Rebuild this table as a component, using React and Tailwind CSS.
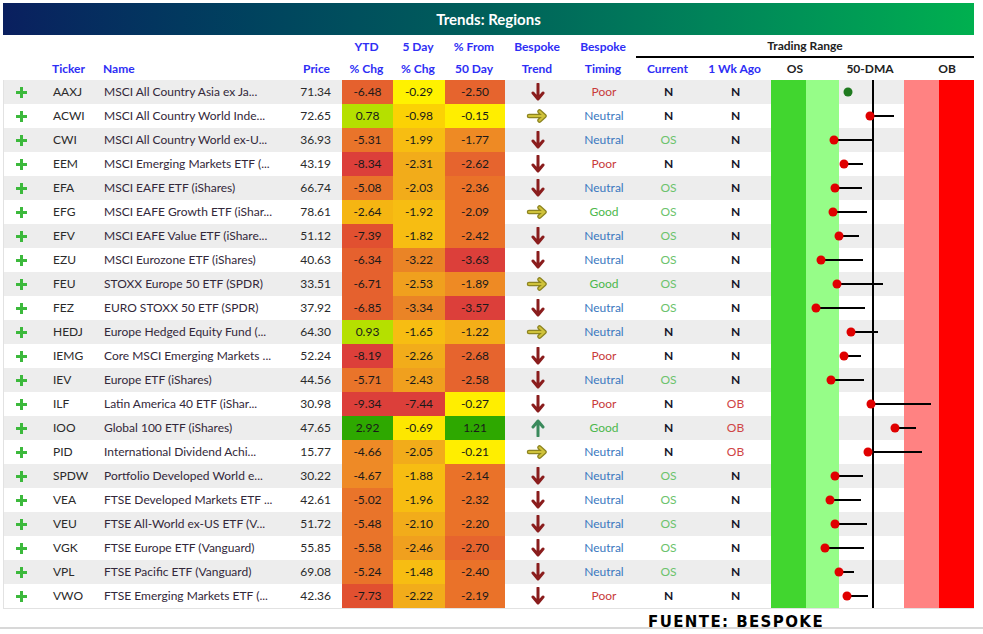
import React from "react";

const rows = [
  ["AAXJ", "MSCI All Country Asia ex Ja...", "71.34", -6.48, -0.29, -2.5, "down", "Poor", "N", "N", 847, null],
  ["ACWI", "MSCI All Country World Inde...", "72.65", 0.78, -0.98, -0.15, "right", "Neutral", "N", "N", 869, 893],
  ["CWI", "MSCI All Country World ex-U...", "36.93", -5.31, -1.99, -1.77, "down", "Neutral", "OS", "N", 833, 871],
  ["EEM", "MSCI Emerging Markets ETF (...", "43.19", -8.34, -2.31, -2.62, "down", "Poor", "N", "N", 843, 862],
  ["EFA", "MSCI EAFE ETF (iShares)", "66.74", -5.08, -2.03, -2.36, "down", "Neutral", "OS", "N", 834, 861],
  ["EFG", "MSCI EAFE Growth ETF (iShar...", "78.61", -2.64, -1.92, -2.09, "right", "Good", "OS", "N", 832, 866],
  ["EFV", "MSCI EAFE Value ETF (iShare...", "51.12", -7.39, -1.82, -2.42, "down", "Neutral", "OS", "N", 838, 858],
  ["EZU", "MSCI Eurozone ETF (iShares)", "40.63", -6.34, -3.22, -3.63, "down", "Neutral", "OS", "N", 820, 862],
  ["FEU", "STOXX Europe 50 ETF (SPDR)", "33.51", -6.71, -2.53, -1.89, "right", "Good", "OS", "N", 836, 882],
  ["FEZ", "EURO STOXX 50 ETF (SPDR)", "37.92", -6.85, -3.34, -3.57, "down", "Neutral", "OS", "N", 815, 864],
  ["HEDJ", "Europe Hedged Equity Fund (...", "64.30", 0.93, -1.65, -1.22, "right", "Neutral", "N", "N", 850, 877],
  ["IEMG", "Core MSCI Emerging Markets ...", "52.24", -8.19, -2.26, -2.68, "down", "Poor", "N", "N", 843, 860],
  ["IEV", "Europe ETF (iShares)", "44.56", -5.71, -2.43, -2.58, "down", "Neutral", "OS", "N", 830, 863],
  ["ILF", "Latin America 40 ETF (iShar...", "30.98", -9.34, -7.44, -0.27, "down", "Poor", "N", "OB", 870, 930],
  ["IOO", "Global 100 ETF (iShares)", "47.65", 2.92, -0.69, 1.21, "up", "Good", "N", "OB", 894, 915],
  ["PID", "International Dividend Achi...", "15.77", -4.66, -2.05, -0.21, "right", "Neutral", "N", "OB", 867, 921],
  ["SPDW", "Portfolio Developed World e...", "30.22", -4.67, -1.88, -2.14, "down", "Neutral", "OS", "N", 834, 862],
  ["VEA", "FTSE Developed Markets ETF ...", "42.61", -5.02, -1.96, -2.32, "down", "Neutral", "OS", "N", 829, 860],
  ["VEU", "FTSE All-World ex-US ETF (V...", "51.72", -5.48, -2.1, -2.2, "down", "Neutral", "OS", "N", 834, 866],
  ["VGK", "FTSE Europe ETF (Vanguard)", "55.85", -5.58, -2.46, -2.7, "down", "Neutral", "OS", "N", 824, 863],
  ["VPL", "FTSE Pacific ETF (Vanguard)", "69.08", -5.24, -1.48, -2.4, "down", "Neutral", "OS", "N", 838, 853],
  ["VWO", "FTSE Emerging Markets ETF (...", "42.36", -7.73, -2.22, -2.19, "down", "Poor", "N", "N", 846, 867],
];

const cols = "grid grid-cols-[36px_61px_180px_61px_51px_52px_60px_66px_66px_63px_71px_204px]";

// colores del heatmap por columna
const ytdColor = (v) =>
  v >= 2 ? "bg-[#2ea800]" : v >= 0.5 ? "bg-[#b5e000]" : v >= -1 ? "bg-[#ffee00]" : v >= -3.5 ? "bg-[#f5b512]" : v >= -5 ? "bg-[#ee8a26]" : v >= -6 ? "bg-[#e9742a]" : v >= -7 ? "bg-[#e5612e]" : v >= -8 ? "bg-[#e15030]" : "bg-[#dc3f3a]";
const dayColor = (v) =>
  v <= -5 ? "bg-[#dc3f3a]" : v <= -3 ? "bg-[#ea8426]" : v <= -2.4 ? "bg-[#f0a01e]" : v <= -2 ? "bg-[#f2ac1a]" : v <= -1.4 ? "bg-[#f7bd12]" : v <= -0.8 ? "bg-[#fbd204]" : v <= -0.5 ? "bg-[#fde700]" : "bg-[#fff200]";
const dmaColor = (v) =>
  v > 0.5 ? "bg-[#2ea800]" : v > -0.5 ? "bg-[#ffee00]" : v > -1.5 ? "bg-[#f4ae18]" : v > -2 ? "bg-[#ee8a24]" : v > -2.45 ? "bg-[#ea7229]" : v > -3 ? "bg-[#e6642e]" : "bg-[#dc3f3a]";

const timingColor = { Poor: "text-[#c83a3a]", Neutral: "text-[#3a78c0]", Good: "text-[#4cb84c]" };
const sigColor = { N: "text-[#141428] font-bold", OS: "text-[#6cc36c]", OB: "text-[#d04545]" };

const Plus = () => (
  <svg width="11" height="11" viewBox="0 0 11 11">
    <rect x="0" y="4" width="11" height="3" fill="#3cb93c" />
    <rect x="4" y="0" width="3" height="11" fill="#3cb93c" />
  </svg>
);

const Arrow = ({ dir }) => {
  if (dir === "right")
    return (
      <svg width="24" height="14" viewBox="0 0 24 14">
        <path d="M3 7h15M13.5 2.5L18.5 7l-5 4.5" stroke="#8d8420" strokeWidth="4.5" fill="none" strokeLinejoin="round" strokeLinecap="round" />
        <path d="M3 7h15M13.5 2.5L18.5 7l-5 4.5" stroke="#cfc23a" strokeWidth="2" fill="none" strokeLinejoin="round" strokeLinecap="round" />
      </svg>
    );
  const up = dir === "up";
  return (
    <svg width="14" height="18" viewBox="0 0 14 18">
      <path
        d={up ? "M7 17V3M2 8l5-6 5 6" : "M7 1v14M2 10l5 6 5-6"}
        stroke={up ? "#3a8a5c" : "#8a1d1d"}
        strokeWidth="3"
        fill="none"
        strokeLinecap="round"
        strokeLinejoin="round"
      />
    </svg>
  );
};

const Range = ({ dot, end, green }) => (
  <div className="relative flex h-full">
    <div className="w-[35px] bg-[#41d62f]" />
    <div className="w-[33px] bg-[#96fd88]" />
    <div className="flex-1" />
    <div className="w-[35px] bg-[#ff8282]" />
    <div className="w-[35px] bg-[#ff0000]" />
    <div className="w-[1px]" />
    <svg className="absolute inset-0" width="204" height="24">
      <rect x="101" y="0" width="2" height="24" fill="#000" />
      {end && <line x1={dot - 770} x2={end - 770} y1="12" y2="12" stroke="#000" strokeWidth="2" />}
      <circle cx={dot - 770} cy="12" r="4.5" fill={green ? "#1f7a1f" : "#e00000"} />
    </svg>
  </div>
);

export default function App() {
  return (
    <div className="w-[983px] h-[634px] bg-white overflow-hidden font-['Lato',sans-serif] text-[12px]">
      <div className="pl-[3px] pt-[3px] w-[974px]">
        <div className="h-[32px] bg-linear-to-r from-[#0a1f5f] via-[#00605a] to-[#00b04f] flex items-center justify-center">
          <span className="text-white font-bold text-[15px]">Trends: Regions</span>
        </div>

        {/* cabecera */}
        <div className={`${cols} h-[23px] items-center font-bold text-[#2e2ef5] text-center`}>
          <div />
          <div />
          <div />
          <div />
          <div>YTD</div>
          <div>5 Day</div>
          <div>% From</div>
          <div>Bespoke</div>
          <div>Bespoke</div>
          <div className="col-span-3 h-full flex items-center justify-center border-b-2 border-black text-[#222]">
            Trading Range
          </div>
        </div>
        <div className={`${cols} h-[22px] items-center font-bold text-[#2e2ef5] text-center`}>
          <div />
          <div className="text-left pl-[13px]">Ticker</div>
          <div className="text-left pl-[3px]">Name</div>
          <div className="text-right pr-[11px]">Price</div>
          <div>% Chg</div>
          <div>% Chg</div>
          <div>50 Day</div>
          <div>Trend</div>
          <div>Timing</div>
          <div>Current</div>
          <div>1 Wk Ago</div>
          <div className="grid grid-cols-[50px_100px_54px] text-[#222]">
            <div>OS</div>
            <div>50-DMA</div>
            <div>OB</div>
          </div>
        </div>

        {/* filas */}
        <div className="border-l border-r border-b border-[#e2e2e2]">
          {rows.map((r, i) => (
            <div key={r[0]} className={`${cols} h-[24px] items-center text-[#2a2a2a] ${i % 2 === 0 ? "bg-[#ededed]" : "bg-white"}`}>
              <div className="flex justify-center pr-[1px]">
                <Plus />
              </div>
              <div className="pl-[13px]">{r[0]}</div>
              <div className="pl-[3px] whitespace-nowrap overflow-hidden text-[#33283a]">{r[1]}</div>
              <div className="text-right pr-[11px]">{r[2]}</div>
              <div className={`h-full flex items-center justify-center text-[#1a1a1a] ${ytdColor(r[3])}`}>{r[3].toFixed(2)}</div>
              <div className={`h-full flex items-center justify-center text-[#1a1a1a] ${dayColor(r[4])}`}>{r[4].toFixed(2)}</div>
              <div className={`h-full flex items-center justify-center text-[#1a1a1a] ${dmaColor(r[5])}`}>{r[5].toFixed(2)}</div>
              <div className="flex justify-center">
                <Arrow dir={r[6]} />
              </div>
              <div className={`text-center ${timingColor[r[7]]}`}>{r[7]}</div>
              <div className={`text-center ${sigColor[r[8]]}`}>{r[8]}</div>
              <div className={`text-center ${sigColor[r[9]]}`}>{r[9]}</div>
              <div className="h-full">
                <Range dot={r[10]} end={r[11]} green={i === 0} />
              </div>
            </div>
          ))}
        </div>
      </div>

      {/* fuente */}
      <div className="h-[20px] border-b-2 border-[#d8d8d8] flex items-end pl-[648px]">
        <span className="font-['DejaVu_Sans',sans-serif] font-bold text-[15px] tracking-[1.4px] leading-none -mb-[3px] text-black">
          FUENTE: BESPOKE
        </span>
      </div>
    </div>
  );
}
